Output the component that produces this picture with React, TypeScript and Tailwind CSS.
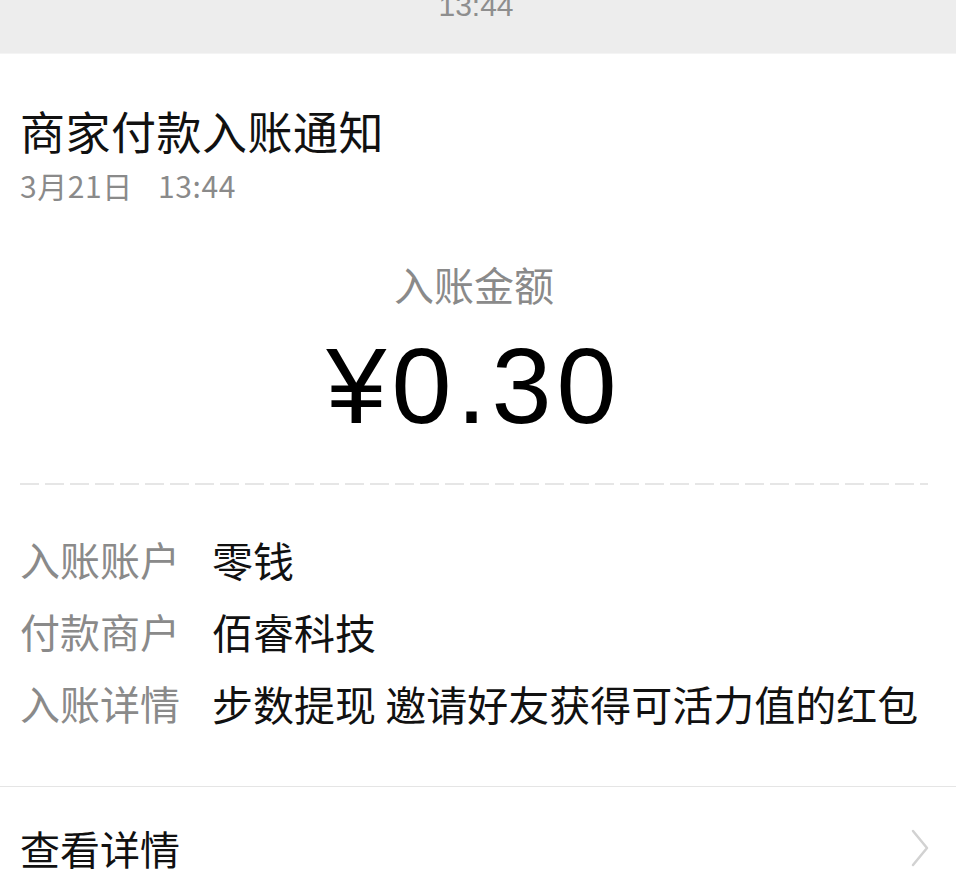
export default function App() {
  const cjk = "font-['Noto_Sans_CJK_SC','Noto_Sans',sans-serif]"

  const rows = [
    { label: '入账账户', value: '零钱' },
    { label: '付款商户', value: '佰睿科技' },
    { label: '入账详情', value: '步数提现 邀请好友获得可活力值的红包' },
  ]

  return (
    <div className={`w-[956px] h-[870px] overflow-hidden bg-white ${cjk}`}>
      {/* time header */}
      <div className="h-[54px] bg-[#ededed] border-b border-[#f4f4f4] flex justify-center overflow-hidden">
        <span className="mt-[-9px] text-[30px] leading-[30px] text-[#8e8e8e] font-['Liberation_Sans',sans-serif] ml-[-4px]">
          13:44
        </span>
      </div>

      <div className="pl-[20px] pr-[28px]">
        <h1 className="mt-[54px] text-[45px] leading-[45px] tracking-[0.5px] text-[#111] font-normal">商家付款入账通知</h1>
        <p className="mt-[17px] text-[30px] leading-[30px] tracking-[0.6px] text-[#8a8a8a]">
          3月21日<span className="inline-block w-[25px]"></span>13:44
        </p>

        <div className="mt-[64px] flex flex-col items-center">
          <p className="text-[40px] leading-[40px] text-[#8a8a8a]">入账金额</p>
          <p className="mt-[28px] text-[108px] leading-[108px] tracking-[5px] text-black font-['Liberation_Sans',sans-serif]">
            ¥0.30
          </p>
        </div>

        <div className="mt-[43px] h-[2px] bg-[repeating-linear-gradient(to_right,#e6e6e6_0,#e6e6e6_19px,transparent_19px,transparent_25px)]" />

        <div className="mt-[38px] flex flex-col">
          {rows.map((r) => (
            <div key={r.label} className="flex h-[72px] items-center leading-[72px]">
              <span className="w-[192px] shrink-0 text-[40px] text-[#8a8a8a]">{r.label}</span>
              <span className="text-[41px] text-[#111] whitespace-nowrap">{r.value}</span>
            </div>
          ))}
        </div>
      </div>

      <div className="mt-[47px] border-t border-[#e5e5e5]" />

      <div className="pl-[20px] pr-[26px] mt-[40px] flex items-center justify-between">
        <span className="text-[40px] leading-[42px] text-[#111]">查看详情</span>
        <svg width="20" height="38" viewBox="0 0 20 38" fill="none">
          <path d="M3 2 L17 19 L3 36" stroke="#d2d2d2" strokeWidth="2.5" strokeLinecap="round" strokeLinejoin="round" />
        </svg>
      </div>
    </div>
  )
}
